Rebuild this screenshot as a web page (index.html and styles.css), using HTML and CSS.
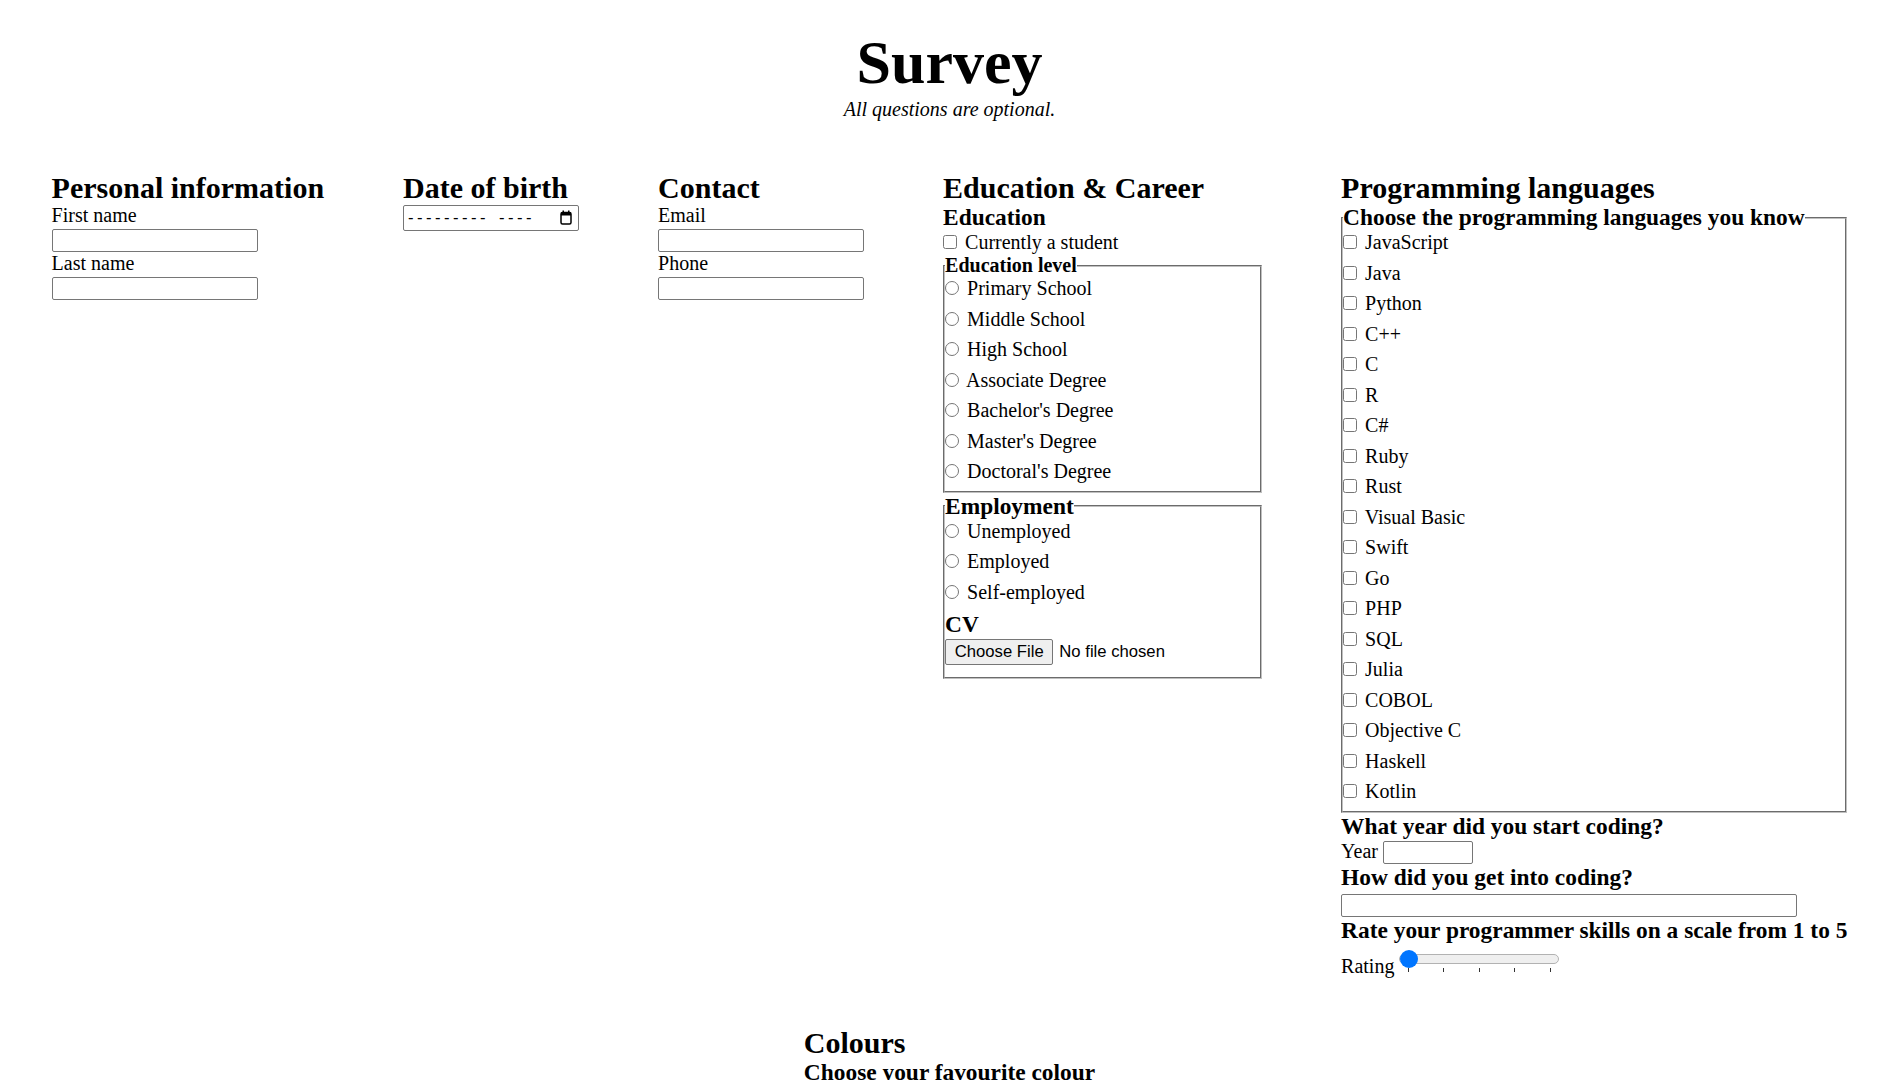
FILE: index.html
```html
<!DOCTYPE html>
<html lang="en">
<head>
<meta charset="utf-8">
<title>Survey</title>
<link rel="stylesheet" href="styles.css">
</head>
<body>
<header class="page-header">
  <h1 class="page-title">Survey</h1>
  <p class="page-subtitle">All questions are optional.</p>
</header>

<form class="survey">
  <section class="block">
    <h2 class="block-title">Personal information</h2>
    <label class="field-label" for="first-name">First name</label>
    <input class="text-input" type="text" id="first-name">
    <label class="field-label" for="last-name">Last name</label>
    <input class="text-input" type="text" id="last-name">
  </section>

  <section class="block">
    <h2 class="block-title">Date of birth</h2>
    <div class="month-field" role="textbox" aria-label="Date of birth" tabindex="0">
      <span class="month-part">---------</span>
      <span class="year-part">----</span>
      <svg class="month-icon" width="12" height="15" viewBox="0 0 12 15" aria-hidden="true">
        <rect x="1" y="2.5" width="10" height="11.5" rx="1.5" fill="none" stroke="#000" stroke-width="1.5"/>
        <rect x="1" y="2.5" width="10" height="3" fill="#000"/>
        <rect x="2.5" y="0.5" width="1.5" height="3" fill="#000"/>
        <rect x="8" y="0.5" width="1.5" height="3" fill="#000"/>
      </svg>
    </div>
  </section>

  <section class="block">
    <h2 class="block-title">Contact</h2>
    <label class="field-label" for="email">Email</label>
    <input class="text-input" type="email" id="email">
    <label class="field-label" for="phone">Phone</label>
    <input class="text-input" type="tel" id="phone">
  </section>

  <section class="block block-career">
    <h2 class="block-title">Education &amp; Career</h2>
    <h3 class="sub-title">Education</h3>
    <div class="choice"><input class="tick-box" type="checkbox" id="student"> <label for="student">Currently a student</label></div>
    <fieldset class="group">
      <legend class="group-legend">Education level</legend>
      <div class="option"><input class="tick-box" type="radio" name="edu" id="edu-1"> <label for="edu-1">Primary School</label></div>
      <div class="option"><input class="tick-box" type="radio" name="edu" id="edu-2"> <label for="edu-2">Middle School</label></div>
      <div class="option"><input class="tick-box" type="radio" name="edu" id="edu-3"> <label for="edu-3">High School</label></div>
      <div class="option"><input class="tick-box" type="radio" name="edu" id="edu-4"> <label for="edu-4">Associate Degree</label></div>
      <div class="option"><input class="tick-box" type="radio" name="edu" id="edu-5"> <label for="edu-5">Bachelor's Degree</label></div>
      <div class="option"><input class="tick-box" type="radio" name="edu" id="edu-6"> <label for="edu-6">Master's Degree</label></div>
      <div class="option"><input class="tick-box" type="radio" name="edu" id="edu-7"> <label for="edu-7">Doctoral's Degree</label></div>
    </fieldset>
    <fieldset class="group">
      <legend class="group-legend group-legend-lg">Employment</legend>
      <div class="option"><input class="tick-box" type="radio" name="job" id="job-1"> <label for="job-1">Unemployed</label></div>
      <div class="option"><input class="tick-box" type="radio" name="job" id="job-2"> <label for="job-2">Employed</label></div>
      <div class="option"><input class="tick-box" type="radio" name="job" id="job-3"> <label for="job-3">Self-employed</label></div>
      <h3 class="sub-title">CV</h3>
      <div class="file-row"><input class="file-input" type="file" id="cv"></div>
    </fieldset>
  </section>

  <section class="block">
    <h2 class="block-title">Programming languages</h2>
    <fieldset class="group group-full">
      <legend class="group-legend group-legend-lg">Choose the programming languages you know</legend>
      <div class="option"><input class="tick-box" type="checkbox" id="pl-1"> <label for="pl-1">JavaScript</label></div>
      <div class="option"><input class="tick-box" type="checkbox" id="pl-2"> <label for="pl-2">Java</label></div>
      <div class="option"><input class="tick-box" type="checkbox" id="pl-3"> <label for="pl-3">Python</label></div>
      <div class="option"><input class="tick-box" type="checkbox" id="pl-4"> <label for="pl-4">C++</label></div>
      <div class="option"><input class="tick-box" type="checkbox" id="pl-5"> <label for="pl-5">C</label></div>
      <div class="option"><input class="tick-box" type="checkbox" id="pl-6"> <label for="pl-6">R</label></div>
      <div class="option"><input class="tick-box" type="checkbox" id="pl-7"> <label for="pl-7">C#</label></div>
      <div class="option"><input class="tick-box" type="checkbox" id="pl-8"> <label for="pl-8">Ruby</label></div>
      <div class="option"><input class="tick-box" type="checkbox" id="pl-9"> <label for="pl-9">Rust</label></div>
      <div class="option"><input class="tick-box" type="checkbox" id="pl-10"> <label for="pl-10">Visual Basic</label></div>
      <div class="option"><input class="tick-box" type="checkbox" id="pl-11"> <label for="pl-11">Swift</label></div>
      <div class="option"><input class="tick-box" type="checkbox" id="pl-12"> <label for="pl-12">Go</label></div>
      <div class="option"><input class="tick-box" type="checkbox" id="pl-13"> <label for="pl-13">PHP</label></div>
      <div class="option"><input class="tick-box" type="checkbox" id="pl-14"> <label for="pl-14">SQL</label></div>
      <div class="option"><input class="tick-box" type="checkbox" id="pl-15"> <label for="pl-15">Julia</label></div>
      <div class="option"><input class="tick-box" type="checkbox" id="pl-16"> <label for="pl-16">COBOL</label></div>
      <div class="option"><input class="tick-box" type="checkbox" id="pl-17"> <label for="pl-17">Objective C</label></div>
      <div class="option"><input class="tick-box" type="checkbox" id="pl-18"> <label for="pl-18">Haskell</label></div>
      <div class="option"><input class="tick-box" type="checkbox" id="pl-19"> <label for="pl-19">Kotlin</label></div>
    </fieldset>
    <h3 class="sub-title">What year did you start coding?</h3>
    <div class="inline-field"><label for="year">Year</label> <input class="text-input year-input" type="text" id="year"></div>
    <h3 class="sub-title">How did you get into coding?</h3>
    <input class="text-input wide-input" type="text" id="story">
    <h3 class="sub-title">Rate your programmer skills on a scale from 1 to 5</h3>
    <div class="inline-field"><label for="rating">Rating</label> <span class="range"><input class="range-input" type="range" id="rating" min="1" max="5" value="1"><span class="ticks"><i class="tick"></i><i class="tick"></i><i class="tick"></i><i class="tick"></i><i class="tick"></i></span></span></div>
  </section>

  <section class="block">
    <h2 class="block-title">Colours</h2>
    <h3 class="sub-title">Choose your favourite colour</h3>
    <div class="option"><input class="tick-box" type="radio" name="colour" id="c-1"> <label for="c-1">Red</label></div>
    <div class="option"><input class="tick-box" type="radio" name="colour" id="c-2"> <label for="c-2">Green</label></div>
    <div class="option"><input class="tick-box" type="radio" name="colour" id="c-3"> <label for="c-3">Blue</label></div>
  </section>
</form>
</body>
</html>
```

FILE: styles.css
```css
html {
  scrollbar-width: none;
}

body {
  margin: 0;
  background: #fff;
  color: #000;
  font-family: "Liberation Serif", "Times New Roman", serif;
  font-size: 20px;
  line-height: 23px;
}

.page-header {
  padding-top: 25.6px;
  text-align: center;
}

.page-title {
  margin: 0;
  font-size: 62px;
  line-height: 72px;
  font-weight: bold;
}

.page-subtitle {
  margin: 0;
  font-style: italic;
  line-height: 23px;
}

.survey {
  display: flex;
  flex-wrap: wrap;
  justify-content: center;
  align-items: flex-start;
  column-gap: 79px;
  row-gap: 49.5px;
  margin-top: 51.6px;
}

.block {
  display: flex;
  flex-direction: column;
  align-items: flex-start;
}

.block-career {
  width: 319px;
  align-items: stretch;
}

.block-title {
  margin: 0;
  font-size: 30px;
  line-height: 32px;
  font-weight: bold;
  white-space: nowrap;
}

.sub-title {
  margin: 0;
  font-size: 23.4px;
  line-height: 26.9px;
  font-weight: bold;
  white-space: nowrap;
}

.field-label {
  display: block;
  line-height: 23px;
}

.text-input {
  display: block;
  box-sizing: border-box;
  width: 206px;
  height: 23px;
  margin: 2px 0 0;
  padding: 1px 2px;
  border: 1px solid #767676;
  border-radius: 2px;
  background: #fff;
  font-family: "Liberation Sans", Arial, sans-serif;
  font-size: 16.67px;
}

.year-input {
  display: inline-block;
  width: 90px;
  margin: 0;
  vertical-align: baseline;
}

.wide-input {
  width: 456px;
  margin-top: 2.7px;
}

.month-field {
  display: flex;
  align-items: center;
  box-sizing: border-box;
  width: 176px;
  height: 25.4px;
  margin-top: 1px;
  padding: 0 6px 0 4px;
  border: 1px solid #767676;
  border-radius: 2px;
  background: #fff;
  font-family: "Liberation Sans", Arial, sans-serif;
  font-size: 16.67px;
  line-height: 19px;
  color: #000;
  white-space: nowrap;
}

.month-part {
  letter-spacing: 3.45px;
}

.year-part {
  margin-left: 10px;
  letter-spacing: 3.45px;
}

.month-icon {
  display: block;
  margin-left: auto;
}

.choice {
  line-height: 23px;
  white-space: nowrap;
}

.option {
  line-height: 23px;
  margin-bottom: 7.5px;
  white-space: nowrap;
}

.tick-box {
  width: 14px;
  height: 14px;
  margin: 0 3px 0 0;
  vertical-align: baseline;
}

.group {
  margin: 0;
  padding: 0;
  min-width: 0;
  border: 2px groove #c0c0c0;
}

.group-full {
  align-self: stretch;
}

.group-legend {
  padding: 0;
  font-weight: bold;
  line-height: 23px;
  white-space: nowrap;
}

.group-legend-lg {
  font-size: 23.4px;
  line-height: 26.9px;
}

.file-row {
  padding: 1px 0 12px;
}

.file-input {
  display: block;
  height: 26.4px;
  font-family: "Liberation Sans", Arial, sans-serif;
  font-size: 16.67px;
  color: #000;
}

.file-input::file-selector-button {
  box-sizing: border-box;
  height: 26.4px;
  margin: 0 6px 0 0;
  padding: 0 8.7px;
  border: 1px solid #767676;
  border-radius: 2px;
  background: #efefef;
  color: #000;
  font: inherit;
}

.inline-field {
  line-height: 23px;
  white-space: nowrap;
}

.range {
  display: inline-block;
  vertical-align: baseline;
  overflow: hidden;
  width: 160px;
  height: 26px;
  margin-top: 3px;
}

.range-input {
  -webkit-appearance: none;
  appearance: none;
  display: block;
  width: 160px;
  height: 18px;
  margin: 3px 0 0;
  padding: 0;
  background: transparent;
}

.range-input::-webkit-slider-runnable-track {
  box-sizing: border-box;
  height: 10px;
  background: #efefef;
  border: 1px solid #b2b2b2;
  border-radius: 5px;
}

.range-input::-webkit-slider-thumb {
  -webkit-appearance: none;
  appearance: none;
  width: 18px;
  height: 18px;
  margin-top: -5px;
  border: 0;
  border-radius: 50%;
  background: #0075ff;
}

.ticks {
  display: flex;
  justify-content: space-between;
  height: 5px;
  padding: 0 8.5px;
}

.tick {
  display: block;
  width: 1px;
  height: 4.4px;
  background: #333;
}
```
